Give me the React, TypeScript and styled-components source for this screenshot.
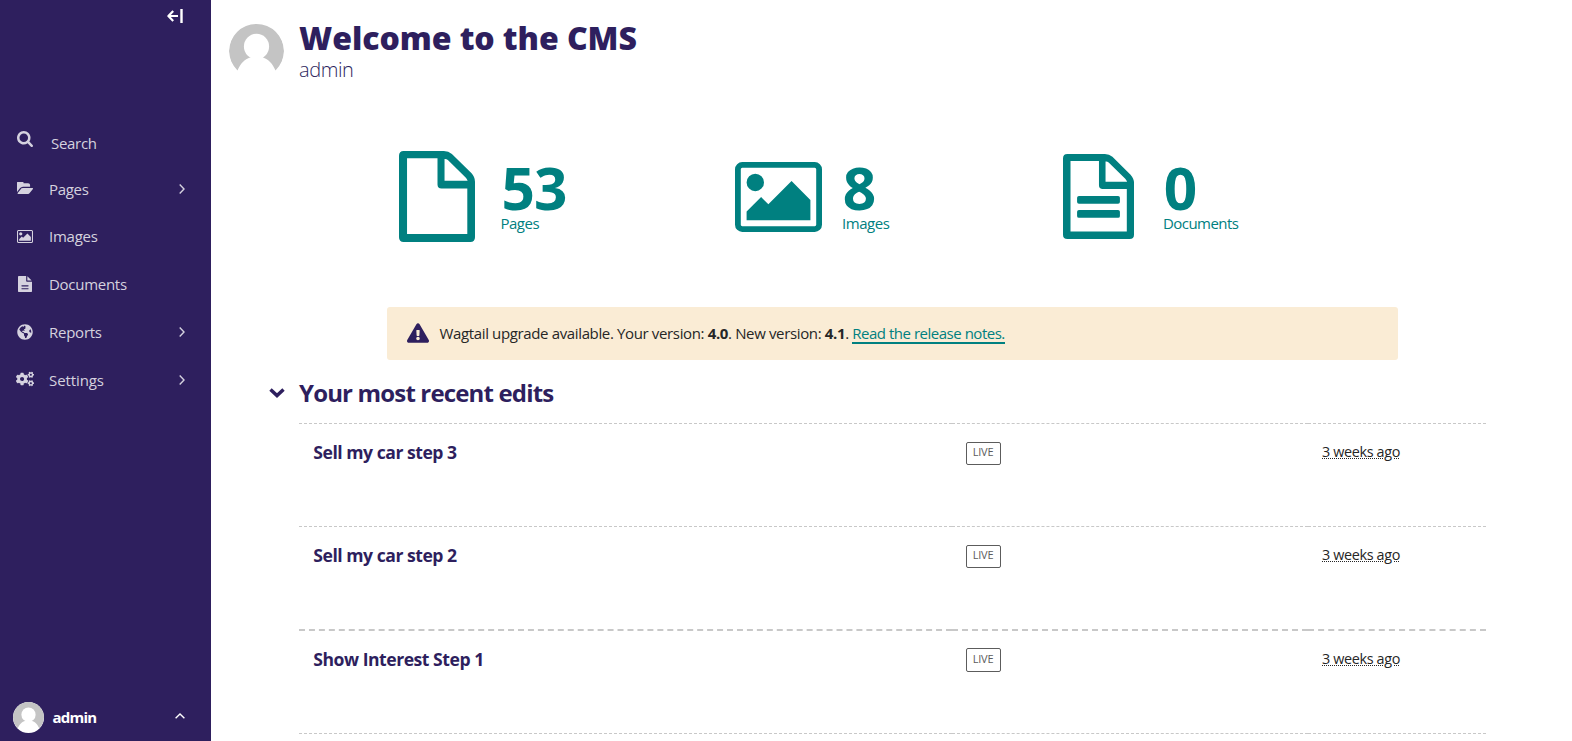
import React from "react";
import styled, { createGlobalStyle } from "styled-components";
import { FaCogs, FaExclamationTriangle, FaGlobeAmericas } from "react-icons/fa";

const GlobalStyle = createGlobalStyle`
  *, *::before, *::after { box-sizing: border-box; }
  html, body { margin: 0; padding: 0; overflow: hidden; background: #fff; }
  body { font-family: "Open Sans", "Noto Sans", sans-serif; color: #262626; }
  svg { display: block; }
`;

const colors = {
  primary: "#2e1f5e",
  teal: "#008080",
  muted: "#5c5c5c",
  line: "#c8c8c8",
  warning: "#faecd5",
  menu: "#d5d2df",
};

const Page = styled.div`
  display: flex;
  width: 1572px;
  height: 741px;
  overflow: hidden;
`;

/* Sidebar */

const Sidebar = styled.nav`
  flex: 0 0 211px;
  display: flex;
  flex-direction: column;
  background: ${colors.primary};
  color: ${colors.menu};
`;

const SidebarTop = styled.div`
  height: 120px;
  display: flex;
  justify-content: flex-end;
  align-items: flex-start;
  padding: 9px 28px 0 0;
  color: #fff;
`;

const MenuRow = styled.div<{ $search?: boolean }>`
  display: flex;
  align-items: center;
  height: ${(p) => (p.$search ? 44.8 : 47.8)}px;
  padding: ${(p) => (p.$search ? 1.4 : 0)}px 26px 0 0;
`;

const MenuIcon = styled.span<{ $raise?: number }>`
  width: 50px;
  display: flex;
  justify-content: center;
  margin-bottom: ${(p) => p.$raise ?? 0.4}px;
`;

const MenuLabel = styled.span<{ $indent?: number; $track?: number }>`
  flex: 1;
  margin-left: ${(p) => p.$indent ?? -1}px;
  font-size: 15px;
  line-height: 24px;
  letter-spacing: ${(p) => p.$track ?? -0.3}px;
`;

const Account = styled.div`
  margin-top: auto;
  display: flex;
  align-items: center;
  height: 47px;
  padding: 0 26px 0 13px;
  color: #fff;

  & > svg:last-child { margin-bottom: 3px; }
`;

const AccountName = styled.span`
  flex: 1;
  margin: 0 0 2px 8.5px;
  font-size: 15px;
  font-weight: 700;
  line-height: 24px;
  letter-spacing: -0.75px;
`;

/* Avatar */

const AvatarSvg = styled.svg<{ $size: number }>`
  flex: none;
  width: ${(p) => p.$size}px;
  height: ${(p) => p.$size}px;
  border-radius: 50%;
  background: #fff;
`;

const Avatar = ({ size }: { size: number }) => (
  <AvatarSvg $size={size} viewBox="0 0 55 55">
    <path d="M8.5 46.5A27.5 27.5 0 1 1 46.5 46.5C44 40 39 34.5 33 33.2H22C16 34.5 11 40 8.5 46.5Z" fill="#c4c4c4" />
    <ellipse cx="27.5" cy="22.5" rx="12.6" ry="12.8" fill="#fff" />
  </AvatarSvg>
);

/* Main column */

const Main = styled.main`
  flex: 1;
  min-width: 0;
`;

const Header = styled.header`
  display: flex;
  align-items: flex-start;
  height: 106px;
  padding: 18px 0 0 18px;
  color: ${colors.primary};
`;

const AvatarSlot = styled.div`
  margin: 6px 15px 0 0;
`;

const Title = styled.h1`
  margin: 0;
  font-size: 32px;
  font-weight: 800;
  line-height: 40px;
  letter-spacing: -0.06px;
`;

const Subtitle = styled.div`
  font-size: 20px;
  font-weight: 350;
  line-height: 24px;
  letter-spacing: -0.4px;
`;

const Summary = styled.ul`
  display: grid;
  grid-template-columns: 336px 328px 200px;
  align-items: center;
  height: 181px;
  margin: 0;
  padding: 0 0 0 187.5px;
  list-style: none;
  color: ${colors.teal};
`;

const SummaryItem = styled.li`
  display: flex;
  align-items: center;
`;

const SummaryIcon = styled.div<{ $slot: number }>`
  width: ${(p) => p.$slot}px;
`;

const SummaryText = styled.div`
  padding-top: 4px;
`;

const Count = styled.div<{ $indent?: number }>`
  margin-left: ${(p) => p.$indent ?? 0.7}px;
  font-size: 58.5px;
  font-weight: 700;
  line-height: 48px;
  letter-spacing: -1px;
`;

const CountLabel = styled.div<{ $track: number }>`
  font-size: 15px;
  line-height: 24px;
  letter-spacing: ${(p) => p.$track}px;
`;

const Notice = styled.div`
  display: flex;
  align-items: center;
  width: 1011px;
  height: 53px;
  margin: 20px 0 0 176px;
  padding: 0 0 2px 20px;
  border-radius: 3px;
  background: ${colors.warning};
  font-size: 15px;
  line-height: 24px;
  letter-spacing: -0.36px;

  svg { color: ${colors.primary}; margin-right: 10.5px; }
`;

const NoticeLink = styled.a`
  display: inline-block;
  border-bottom: 2px solid ${colors.teal};
  color: ${colors.teal};
  letter-spacing: -0.48px;
  line-height: 18px;
  text-decoration: none;
`;

const SectionHeading = styled.h2`
  display: flex;
  align-items: center;
  height: 32px;
  margin: 16.6px 0 14.4px;
  padding-left: 58px;
  color: ${colors.primary};
  font-size: 24px;
  font-weight: 700;
  line-height: 32px;
  letter-spacing: -0.84px;

  svg { margin-right: 14px; }
`;

const Edits = styled.div`
  width: 1187px;
  margin-left: 88px;
`;

const EditRow = styled.div<{ $thick?: boolean }>`
  display: grid;
  grid-template-columns: 653px 356px 178px;
  height: ${(p) => (p.$thick ? 104 : 103)}px;

  & > * {
    border-top: ${(p) => (p.$thick ? 2 : 1)}px dashed ${colors.line};
    padding: 16px 0 0 14px;
  }
`;

const Cell = styled.div``;

const EditTitle = styled.span`
  display: block;
  margin-left: 0.3px;
  color: ${colors.primary};
  font-size: 17.6px;
  font-weight: 700;
  line-height: 24px;
  letter-spacing: -0.48px;
`;

const Status = styled.span<{ $tall?: boolean }>`
  display: flex;
  align-items: center;
  justify-content: center;
  width: 35px;
  height: ${(p) => (p.$tall ? 24 : 23)}px;
  margin-top: ${(p) => (p.$tall ? 1 : 2)}px;
  padding: 0 1px ${(p) => (p.$tall ? 1 : 2)}px 0;
  border: 1px solid ${colors.muted};
  border-radius: 2px;
  color: ${colors.muted};
  font-size: 11px;
  line-height: 16px;
  letter-spacing: -0.2px;
`;

const Time = styled.span`
  display: block;
  font-size: 14.4px;
  line-height: 24px;
  letter-spacing: -0.36px;
  text-decoration: underline dotted;
  text-decoration-thickness: 1px;
  text-underline-offset: 1px;
`;

/* Icons */

const FILE_OUTLINE =
  "M14 0H134Q148 0 158 9L216 66Q227 78 227 92V258Q227 272 213 272H14Q0 272 0 258V14Q0 0 14 0ZM24 22V248H204V112H127Q115 112 115 100V22ZM136 24V89H205Q203 83 199 79L146 27Q141 23 136 24Z";
const PICTURE =
  "M576 576q0 80-56 136t-136 56-136-56-56-136 56-136 136-56 136 56 56 136zm1024 384v448h-1408v-192l320-320 160 160 512-512zm96-704h-1600q-13 0-22.5 9.5t-9.5 22.5v1216q0 13 9.5 22.5t22.5 9.5h1600q13 0 22.5-9.5t9.5-22.5v-1216q0-13-9.5-22.5t-22.5-9.5zm160 32v1216q0 66-47 113t-113 47h-1600q-66 0-113-47t-47-113v-1216q0-66 47-113t113-47h1600q66 0 113 47t47 113z";

type IconProps = { width: number; height: number };

const FileIcon = ({ width, height, lines }: IconProps & { lines?: boolean }) => (
  <svg width={width} height={height} viewBox="0 0 227 272" preserveAspectRatio="none" fill="currentColor">
    <path d={FILE_OUTLINE} fillRule="evenodd" />
    {lines && <rect x="45" y="134" width="137" height="25" rx="6" />}
    {lines && <rect x="45" y="179" width="137" height="25" rx="6" />}
  </svg>
);

const PictureIcon = ({ width, height }: IconProps) => (
  <svg width={width} height={height} viewBox="-64 128 1920 1536" preserveAspectRatio="none" fill="currentColor">
    <path d={PICTURE} />
  </svg>
);

const SearchIcon = () => (
  <svg width="16" height="16" viewBox="64 128 1664 1664" fill="currentColor">
    <path d="M1216 832q0-185-131.5-316.5t-316.5-131.5-316.5 131.5-131.5 316.5 131.5 316.5 316.5 131.5 316.5-131.5 131.5-316.5zm512 832q0 52-38 90t-90 38q-54 0-90-38l-343-342q-179 124-399 124-143 0-273.5-55.5t-225-150-150-225-55.5-273.5 55.5-273.5 150-225 225-150 273.5-55.5 273.5 55.5 225 150 150 225 55.5 273.5q0 220-124 399l343 343q37 37 37 90z" />
  </svg>
);

const FolderIcon = () => (
  <svg width="16" height="12" viewBox="64 256 1879 1280" preserveAspectRatio="none" fill="currentColor">
    <path d="M1943 952q0 31-31 66l-336 396q-43 51-120.5 86.5t-143.5 35.5h-1088q-34 0-60.5-13t-26.5-43q0-31 31-66l336-396q43-51 120.5-86.5t143.5-35.5h1088q34 0 60.5 13t26.5 43zm-343-344v160h-832q-94 0-197 47.5t-164 119.5l-337 396-5 6q0-4-.5-12.5t-.5-12.5v-960q0-92 66-158t158-66h320q92 0 158 66t66 158v32h544q92 0 158 66t66 158z" />
  </svg>
);

const DocumentIcon = () => (
  <svg width="14" height="16" viewBox="128 0 1536 1792" preserveAspectRatio="none" fill="currentColor">
    <path d="M1596 476q14 14 28 36h-472v-472q22 14 36 28zm-476 164h544v1056q0 40-28 68t-68 28h-1344q-40 0-68-28t-28-68v-1600q0-40 28-68t68-28h800v544q0 40 28 68t68 28zm160 816v-64q0-14-9-23t-23-9h-704q-14 0-23 9t-9 23v64q0 14 9 23t23 9h704q14 0 23-9t9-23zm0-320v-64q0-14-9-23t-23-9h-704q-14 0-23 9t-9 23v64q0 14 9 23t23 9h704q14 0 23-9t9-23z" />
  </svg>
);

const CollapseIcon = () => (
  <svg width="16" height="14" viewBox="0 0 16 14" fill="none" stroke="#fff" strokeWidth="2.2">
    <path d="M6.2 2 1.4 7l4.8 5M1.6 7H11" strokeLinejoin="round" />
    <path d="M14.5 0v14" strokeWidth="2.4" />
  </svg>
);

const Chevron = () => (
  <svg width="6" height="10" viewBox="0 0 6 10" fill="none" stroke="currentColor" strokeWidth="1.4">
    <path d="M.7.6 5 5 .7 9.4" />
  </svg>
);

const ChevronUp = () => (
  <svg width="10" height="6" viewBox="0 0 10 6" fill="none" stroke="currentColor" strokeWidth="1.4">
    <path d="M.6 5.3 5 1l4.4 4.3" />
  </svg>
);

const ChevronDown = () => (
  <svg width="16" height="10" viewBox="0 0 16 10" fill="none" stroke="currentColor" strokeWidth="3.5">
    <path d="m1.5 1.5 6.5 6 6.5-6" />
  </svg>
);

const menu = [
  { label: "Pages", icon: <FolderIcon />, raise: 1.5, more: true, track: -0.3 },
  { label: "Images", icon: <PictureIcon width={16} height={13} />, track: -0.25 },
  { label: "Documents", icon: <DocumentIcon />, track: -0.28 },
  { label: "Reports", icon: <FaGlobeAmericas size={16} />, more: true, track: -0.25 },
  { label: "Settings", icon: <FaCogs size={18} />, raise: 1, more: true, track: -0.1 },
];

const edits = [
  { title: "Sell my car step 3" },
  { title: "Sell my car step 2" },
  { title: "Show Interest Step 1", thick: true },
];

export default function App() {
  return (
    <Page>
      <GlobalStyle />
      <Sidebar>
        <SidebarTop>
          <CollapseIcon />
        </SidebarTop>
        <MenuRow $search>
          <MenuIcon $raise={8}>
            <SearchIcon />
          </MenuIcon>
          <MenuLabel $indent={1}>Search</MenuLabel>
        </MenuRow>
        {menu.map((item) => (
          <MenuRow key={item.label}>
            <MenuIcon $raise={item.raise}>{item.icon}</MenuIcon>
            <MenuLabel $track={item.track}>{item.label}</MenuLabel>
            {item.more && <Chevron />}
          </MenuRow>
        ))}
        <Account>
          <Avatar size={31} />
          <AccountName>admin</AccountName>
          <ChevronUp />
        </Account>
      </Sidebar>
      <Main>
        <Header>
          <AvatarSlot>
            <Avatar size={55} />
          </AvatarSlot>
          <div>
            <Title>Welcome to the CMS</Title>
            <Subtitle>admin</Subtitle>
          </div>
        </Header>
        <Summary>
          <SummaryItem>
            <SummaryIcon $slot={102}>
              <FileIcon width={76} height={91} />
            </SummaryIcon>
            <SummaryText>
              <Count $indent={1}>53</Count>
              <CountLabel $track={-0.5}>Pages</CountLabel>
            </SummaryText>
          </SummaryItem>
          <SummaryItem>
            <SummaryIcon $slot={107.5}>
              <PictureIcon width={87} height={70} />
            </SummaryIcon>
            <SummaryText>
              <Count>8</Count>
              <CountLabel $track={-0.45}>Images</CountLabel>
            </SummaryText>
          </SummaryItem>
          <SummaryItem>
            <SummaryIcon $slot={100.5}>
              <FileIcon width={71} height={85} lines />
            </SummaryIcon>
            <SummaryText>
              <Count>0</Count>
              <CountLabel $track={-0.55}>Documents</CountLabel>
            </SummaryText>
          </SummaryItem>
        </Summary>
        <Notice>
          <FaExclamationTriangle size={22} />
          <span>
            Wagtail upgrade available. Your version: <b>4.0</b>. New version: <b>4.1</b>.{" "}
            <NoticeLink>Read the release notes.</NoticeLink>
          </span>
        </Notice>
        <SectionHeading>
          <ChevronDown />
          Your most recent edits
        </SectionHeading>
        <Edits>
          {edits.map((edit) => (
            <EditRow key={edit.title} $thick={edit.thick}>
              <Cell>
                <EditTitle>{edit.title}</EditTitle>
              </Cell>
              <Cell>
                <Status $tall={edit.thick}>LIVE</Status>
              </Cell>
              <Cell>
                <Time>3 weeks ago</Time>
              </Cell>
            </EditRow>
          ))}
          <EditRow>
            <Cell />
            <Cell />
            <Cell />
          </EditRow>
        </Edits>
      </Main>
    </Page>
  );
}
